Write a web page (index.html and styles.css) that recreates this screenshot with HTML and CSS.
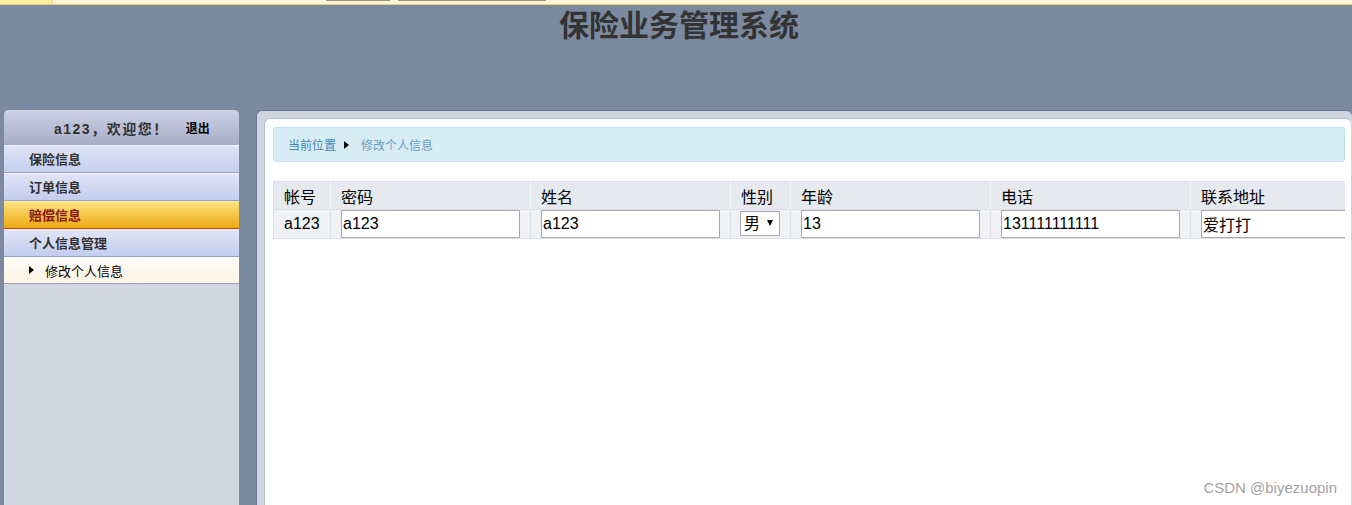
FILE: index.html
```html
<!DOCTYPE html>
<html lang="zh-CN">
<head>
<meta charset="utf-8">
<title>保险业务管理系统</title>
<link rel="stylesheet" href="styles.css">
</head>
<body>
<div class="topbar">
  <div class="topbar-left"></div>
  <div class="tab tab-a"></div>
  <div class="tab tab-b"></div>
</div>
<div class="header">
  <h1 class="title">保险业务管理系统</h1>
</div>
<div class="layout">
  <aside class="sidebar">
    <div class="side-head">
      <span class="welcome">a123，欢迎您！</span>
      <a class="logout">退出</a>
    </div>
    <div class="menu-item">保险信息</div>
    <div class="menu-item">订单信息</div>
    <div class="menu-item active">赔偿信息</div>
    <div class="menu-item">个人信息管理</div>
    <div class="sub-item">
      <svg class="tri" width="5" height="8" viewBox="0 0 5 8"><path d="M0 0 L5 4 L0 8 Z" fill="#000"/></svg>
      <span>修改个人信息</span>
    </div>
  </aside>
  <main class="main">
    <div class="inner">
      <div class="crumb">
        <span class="crumb-home">当前位置</span>
        <svg class="tri crumb-tri" width="5" height="8" viewBox="0 0 5 8"><path d="M0 0 L5 4 L0 8 Z" fill="#000"/></svg>
        <span class="crumb-cur">修改个人信息</span>
      </div>
      <div class="table-wrap">
        <table class="info">
          <colgroup>
            <col class="c-id">
            <col class="c-wide">
            <col class="c-wide">
            <col class="c-sex">
            <col class="c-wide">
            <col class="c-wide">
            <col class="c-wide">
          </colgroup>
          <thead>
            <tr>
              <th>帐号</th>
              <th>密码</th>
              <th>姓名</th>
              <th>性别</th>
              <th>年龄</th>
              <th>电话</th>
              <th>联系地址</th>
            </tr>
          </thead>
          <tbody>
            <tr>
              <td class="plain">a123</td>
              <td><input class="field" type="text" value="a123"></td>
              <td><input class="field" type="text" value="a123"></td>
              <td class="sex-cell"><span class="sel"><select class="sel-box"><option>男</option><option>女</option></select></span></td>
              <td><input class="field" type="text" value="13"></td>
              <td><input class="field" type="text" value="131111111111"></td>
              <td><input class="field" type="text" value="爱打打"></td>
            </tr>
          </tbody>
        </table>
      </div>
    </div>
  </main>
</div>
<div class="watermark">CSDN @biyezuopin</div>
</body>
</html>
```
FILE: styles.css
```css
html, body {
  margin: 0;
  padding: 0;
}
body {
  width: 1352px;
  height: 505px;
  overflow: hidden;
  background: #7b8aa0;
  font-family: "Liberation Sans", "Noto Sans CJK SC", sans-serif;
  position: relative;
}

/* top strip */
.topbar {
  height: 4px;
  background: #fff5d0;
  border-bottom: 1px solid #e4d28c;
  display: flex;
  align-items: flex-start;
}
.topbar-left {
  width: 52px;
  height: 4px;
  background: #ffeb9c;
  border-right: 1px solid #efd98e;
}
.tab {
  height: 1px;
  background: #9a9684;
}
.tab-a {
  margin-left: 273px;
  width: 64px;
}
.tab-b {
  margin-left: 8px;
  width: 148px;
}

/* header */
.header {
  height: 105px;
  padding-top: 4px;
  box-sizing: border-box;
}
.title {
  margin: 0;
  text-align: center;
  font-size: 30px;
  line-height: 34px;
  font-weight: bold;
  color: #333;
  padding-left: 6px;
}

/* layout */
.layout {
  display: flex;
  gap: 17px;
  padding-left: 4px;
  height: 395px;
}

/* sidebar */
.sidebar {
  width: 235px;
  flex: none;
  background: #d2d8e2;
  border-radius: 5px 5px 0 0;
  overflow: hidden;
}
.side-head {
  height: 35px;
  display: flex;
  align-items: center;
  padding-left: 50px;
  gap: 17px;
  background: linear-gradient(#cbd0e3, #a6aec8);
}
.welcome {
  font-size: 14px;
  font-weight: bold;
  color: #333;
  letter-spacing: 1.5px;
}
.logout {
  font-size: 12px;
  font-weight: bold;
  color: #000;
}
.menu-item {
  height: 26px;
  line-height: 27px;
  padding-left: 25px;
  font-size: 13px;
  font-weight: bold;
  color: #333;
  border-top: 1px solid #f4f6fc;
  border-bottom: 1px solid #93a2c4;
  background: linear-gradient(#dfe4f5, #c3cdee);
}
.menu-item.active {
  color: #8a1414;
  border-top: 1px solid #fde99a;
  border-bottom: 1px solid #c83a10;
  background: linear-gradient(#fde37e, #eda912);
}
.sub-item {
  height: 26px;
  display: flex;
  align-items: center;
  padding-left: 25px;
  font-size: 13px;
  color: #000;
  border-bottom: 1px solid #8e9fc0;
  background: linear-gradient(#fffcf7, #fff3e4);
}
.sub-item .tri {
  margin-right: 11px;
}
.tri {
  display: block;
  flex: none;
}

/* main */
.main {
  flex: 1;
  min-width: 0;
  border-top: 1px solid #6a7794;
  border-left: 1px solid #6a7794;
  border-radius: 6px 6px 0 0;
  background: #d0d6e1;
  padding: 7px 1px 0 7px;
}
.inner {
  height: 100%;
  box-sizing: border-box;
  background: #fff;
  border-top: 1px solid #b4bccc;
  border-left: 1px solid #b4bccc;
  border-radius: 6px 6px 0 0;
  padding: 8px 6px 0 8px;
  overflow: hidden;
}
.crumb {
  height: 33px;
  display: flex;
  align-items: center;
  padding-left: 14px;
  border: 1px solid #bfe2f0;
  border-radius: 3px;
  background: #d8ecf6;
  font-size: 12px;
}
.crumb-home {
  color: #3f86b5;
}
.crumb-tri {
  margin: 0 12px 0 8px;
}
.crumb-cur {
  color: #6c9dc1;
}

/* table */
.table-wrap {
  margin-top: 19px;
  overflow: hidden;
}
.info {
  border-collapse: collapse;
  table-layout: fixed;
  width: 1117px;
  font-size: 16px;
  color: #000;
}
.c-id { width: 57px; }
.c-wide { width: 200px; }
.c-sex { width: 60px; }
.info th {
  height: 27px;
  padding: 0 10px;
  text-align: left;
  font-weight: normal;
  white-space: nowrap;
  background: #e6e9ee;
  border: 1px solid #dcdfe5;
  border-right-color: #f3f4f7;
  border-left-color: #f3f4f7;
}
.info th:first-child {
  border-left-color: #dcdfe5;
  padding-left: 10px;
}
.info td {
  height: 28px;
  padding: 0 10px;
  background: #eff1f4;
  border: 1px solid #dde0e6;
  vertical-align: top;
}
.info td.plain {
  vertical-align: middle;
}
.field {
  display: block;
  width: 179px;
  height: 28px;
  box-sizing: border-box;
  margin: 0;
  padding: 0 1px;
  border: 1px solid #a9a9a9;
  background: #fff;
  font-family: "Liberation Sans", "Noto Sans CJK SC", sans-serif;
  font-size: 16px;
  color: #000;
  outline: none;
}
.info td.sex-cell {
  padding-left: 9px;
}
.sel {
  position: relative;
  display: block;
  width: 40px;
  height: 25px;
  margin-top: 1px;
}
.sel-box {
  appearance: none;
  -webkit-appearance: none;
  display: block;
  width: 40px;
  height: 25px;
  box-sizing: border-box;
  margin: 0;
  padding: 0 0 0 3px;
  border: 1px solid #a9a9a9;
  border-radius: 0;
  background: #fff;
  font-family: "Liberation Sans", "Noto Sans CJK SC", sans-serif;
  font-size: 16px;
  color: #000;
  outline: none;
}
.sel::after {
  content: "";
  position: absolute;
  left: 27px;
  top: 9px;
  border-left: 3px solid transparent;
  border-right: 3px solid transparent;
  border-top: 6px solid #000;
  pointer-events: none;
}

/* watermark */
.watermark {
  position: absolute;
  right: 15px;
  top: 479px;
  font-size: 15px;
  color: #a3a3a3;
  font-family: "Liberation Sans", sans-serif;
}
```
